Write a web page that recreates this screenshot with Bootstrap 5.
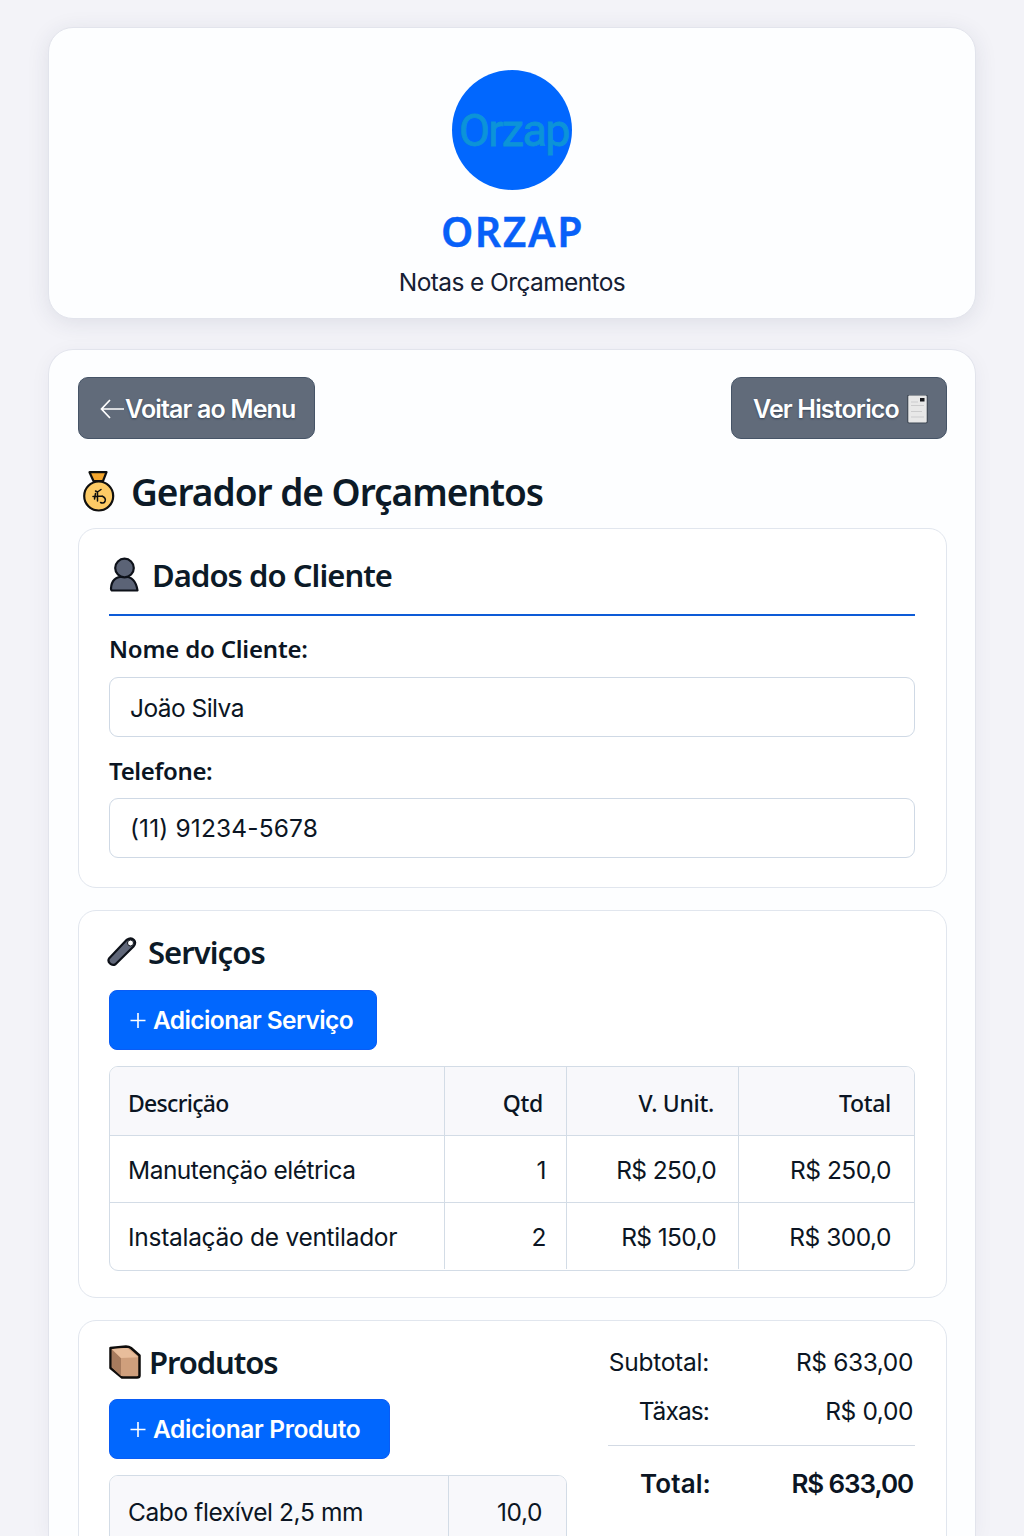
<!DOCTYPE html>
<html lang="pt-BR">
<head>
<meta charset="utf-8">
<meta name="viewport" content="width=device-width, initial-scale=1">
<title>ORZAP - Gerador de Orçamentos</title>
<link href="https://cdn.jsdelivr.net/npm/bootstrap@5.3.0/dist/css/bootstrap.min.css" rel="stylesheet">
<style>
  html, body { height: 1536px; overflow: hidden; }
  body { background: #f3f3f8; font-family: Inter, "Liberation Sans", sans-serif; font-size: 24.5px; line-height: 32px; color: #0b1523; padding: 27px 48px 0 48px; letter-spacing: -.4px; }
  .panel { background: #fdfeff; border: 1px solid #e2e4ec; border-radius: 25px; }
  .brand-panel { height: 292px; margin-bottom: 30px; padding-top: 42px; box-shadow: 0 4px 22px rgba(40, 45, 80, .10); }
  .main-panel { height: 1187px; padding: 27px 28px 0 29px; border-bottom: 0; border-radius: 25px 25px 0 0; overflow: hidden; box-shadow: 0 4px 20px rgba(40, 45, 80, .05); }
  .logo-disc { width: 120px; height: 120px; background: #0167fe; color: #0c93d8; font: 400 45px/122px Roboto, sans-serif; letter-spacing: -1.7px; padding-left: 7px; white-space: nowrap; -webkit-text-stroke: .8px #0c93d8; }
  .brand-name { font: 600 41px/50px "Noto Sans", sans-serif; letter-spacing: 1.6px; color: #0860f8; margin-top: 16px; padding-left: 1px; -webkit-text-stroke: .4px #0860f8; }
  .brand-sub { margin-top: 10px; letter-spacing: -.6px; color: #162033; }
  .btn-nav { height: 62px; background: #616b7a; border: 1px solid #465467; border-radius: 10px; color: #fff; font-weight: 600; padding: 3px 18px 0 21px; letter-spacing: -.85px; text-shadow: 0 1px 2px #364254; font-size: 25px; }
  .btn-back { width: 237px; }
  .btn-hist { width: 216px; }
  .btn-add { height: 60px; background: #0167fe; border: 1px solid #0a5cf5; border-radius: 8px; color: #fff; font-weight: 600; font-size: 24.5px; padding: 1px 20px 0; gap: 7px; }
  .btn-nav:hover, .btn-add:hover { color: #fff; background: #0a58ca; }
  .page-title { font: 600 37px/50px "Noto Sans", sans-serif; letter-spacing: -1px; color: #0c1a27; margin: 28px 0 11px; height: 50px; gap: 11px; }
  .box { background: #fff; border: 1px solid #e1e6ee; border-radius: 18px; padding: 0 31px 0 30px; margin-bottom: 22px; }
  .box-title { font: 600 31px/42px "Noto Sans", sans-serif; letter-spacing: -.95px; color: #0c1a27; margin: 0; height: 42px; gap: 12px; }
  .client { height: 360px; padding-top: 25px; }
  .client .box-title { gap: 11px; }
  .services { height: 388px; padding-top: 20px; }
  .products { height: 400px; padding-top: 20px; }
  .products .box-title { gap: 8px; letter-spacing: -1.1px; }
  .i-tool { margin: 0 -1px 0 -2px; }
  .blue-rule { height: 2px; background: #0d5bd7; margin-top: 18px; }
  .field-label { font: 600 24px/34px "Noto Sans", sans-serif; display: block; margin: 16px 0 11px; height: 34px; letter-spacing: -.2px; }
  .field + .field-label { margin: 17px 0 10px; letter-spacing: -.35px; }
  .field { height: 60px; border: 1px solid #cfd9e5; border-radius: 9px; padding: 2px 20px 0; font-size: 24.5px; color: #0b1523; letter-spacing: -.55px; }
  #telefone { letter-spacing: .15px; padding-top: 0; }
  .grid-box { border: 1px solid #d3dce6; border-radius: 9px; overflow: hidden; }
  .grid-box table { width: 100%; table-layout: fixed; margin: 0; border-collapse: separate; border-spacing: 0; }
  .grid-box th, .grid-box td { border-left: 1px solid #d3dce6; border-top: 1px solid #d3dce6; padding: 2px 23px 0 18px; text-align: right; font-weight: 400; white-space: nowrap; height: 67px; }
  .grid-box td { letter-spacing: -.5px; }
  .grid-box tr > :first-child { border-left: 0; text-align: left; }
  .grid-box tr:first-child > * { border-top: 0; }
  .grid-box th { background: #f8f8fb; font: 500 23px/32px "Noto Sans", sans-serif; letter-spacing: -.3px; height: 68px; padding-top: 3px; }
  .grid-box th:nth-child(3) { padding-right: 24px; }
  .grid-box th:first-child { letter-spacing: -.7px; }
  .grid-box td.wide { letter-spacing: -.28px; }
  .grid-box td.qty { padding-right: 20px; }
  .grid-box td.unit { padding-right: 22px; letter-spacing: -.65px; }
  .services .btn-add { margin-top: 17px; width: 268px; letter-spacing: -.6px; }
  .products .btn-add { margin-top: 16px; width: 281px; letter-spacing: -.35px; }
  .serv-grid { margin-top: 16px; height: 205px; }
  .prod-col { width: 458px; }
  .prod-grid { margin-top: 16px; height: 90px; }
  .prod-grid td { background: #f8f8fb; height: 70px; padding: 1px 24px 0 18px; letter-spacing: -.4px; }
  .sum { width: 307px; padding-top: 5px; }
  .sum-label { width: 101px; text-align: right; letter-spacing: -.25px; }
  .sum-line { height: 32px; padding-right: 2px; white-space: nowrap; }
  .tax { margin-top: 17px; }
  .tax .sum-label { letter-spacing: -.9px; }
  .grand { margin-top: 18px; border-top: 1px solid #d3dae4; height: 80px; padding-top: 22px; font-weight: 600; font-size: 26px; letter-spacing: -1.1px; }
  .grand .sum-label { width: 103px; letter-spacing: .1px; }
  svg { flex: none; display: block; }
</style>
</head>
<body>
<header class="panel brand-panel d-flex flex-column align-items-center">
  <div class="logo-disc rounded-circle">Orzap</div>
  <h1 class="brand-name mb-0">ORZAP</h1>
  <p class="brand-sub mb-0">Notas e Orçamentos</p>
</header>

<main class="panel main-panel">
  <div class="d-flex justify-content-between">
    <button class="btn btn-nav btn-back d-flex align-items-center" type="button">
      <svg width="25" height="22" viewBox="0 0 25 22" fill="none" stroke="#fff" stroke-width="1.7"><path d="M24 10H2M10 1L1.500 10L10 19"/></svg>
      <span>Voitar ao Menu</span>
    </button>
    <button class="btn btn-nav btn-hist d-flex align-items-center" type="button">
      <span>Ver Historico</span>
      <svg class="ms-2" width="21" height="30" viewBox="0 0 21 30"><rect x=".7" y="0" width="19.600" height="28" rx="1.500" fill="#e8e8e8" stroke="#3f4854" stroke-width="1.200"/><rect x="13" y="3" width="4.500" height="3.500" fill="#17191d"/><path d="M4 7H11M4 10.500H17M4 16.500H15M4 22H17" stroke="#cccccd" stroke-width="1.200"/></svg>
    </button>
  </div>

  <h2 class="page-title d-flex align-items-center">
    <svg width="42" height="42" viewBox="0 0 42 42" stroke="#10100f" stroke-width="2.200" stroke-linejoin="round" stroke-linecap="round"><path d="M11.500 1.200H28.500L25 10H15.500Z" fill="#f5a72e"/><circle cx="20.700" cy="25" r="14.500" fill="#fdcb65"/><path d="M23 18.500L19.500 21V30M19.500 21L17.500 20M15 25.500L24 25M17.500 22.500L16.500 28M24 25Q28.500 27 27 30.500Q25.500 33 22.500 31.500" fill="none" stroke-width="1.500"/></svg>
    <span>Gerador de Orçamentos</span>
  </h2>

  <section class="box client">
    <h3 class="box-title d-flex align-items-center">
      <svg width="32" height="36" viewBox="0 0 32 36" fill="#5b6376" stroke="#0d1119" stroke-width="2.200" stroke-linejoin="round"><path d="M3.500 33.500Q2 33.500 2 31.500Q2.500 19.500 15 19.500Q26.500 19.500 28.500 33.500Z"/><circle cx="15.500" cy="11" r="9.300"/></svg>
      <span>Dados do Cliente</span>
    </h3>
    <div class="blue-rule"></div>
    <label class="field-label" for="nome">Nome do Cliente:</label>
    <input class="form-control field" id="nome" type="text" value="Joäo Silva">
    <label class="field-label" for="telefone">Telefone:</label>
    <input class="form-control field" id="telefone" type="text" value="(11) 91234-5678">
  </section>

  <section class="box services">
    <h3 class="box-title d-flex align-items-center">
      <svg class="i-tool" width="30" height="30" viewBox="0 0 30 30" stroke="#0d1119" stroke-width="2.200" stroke-linejoin="round"><path d="M2 21.500L19.500 3Q24 0 27 3Q29.500 6 26.500 9.500L8.500 27.200Q5.500 29 3 26.500Q.5 24 2 21.500Z" fill="#606779"/><circle cx="23.500" cy="6" r="3" fill="#fff" stroke-width="1"/></svg>
      <span>Serviços</span>
    </h3>
    <button class="btn btn-add d-flex align-items-center" type="button">
      <svg width="16" height="16" viewBox="0 0 16 16" stroke="#fff" stroke-width="1.600"><path d="M8 0V15M.5 7.500H15.500"/></svg>
      <span>Adicionar Serviço</span>
    </button>
    <div class="grid-box serv-grid">
      <table>
        <colgroup><col style="width:334px"><col style="width:122px"><col style="width:172px"><col></colgroup>
        <tr><th>Descriçäo</th><th>Qtd</th><th>V. Unit.</th><th>Total</th></tr>
        <tr><td>Manutençäo elétrica</td><td class="qty">1</td><td class="unit">R$ 250,0</td><td>R$ 250,0</td></tr>
        <tr><td class="wide">Instalaçäo de ventilador</td><td class="qty">2</td><td class="unit">R$ 150,0</td><td>R$ 300,0</td></tr>
      </table>
    </div>
  </section>

  <section class="box products d-flex justify-content-between">
    <div class="prod-col">
      <h3 class="box-title d-flex align-items-center">
        <svg width="32" height="34" viewBox="0 0 32 34" stroke-linejoin="round"><path d="M1.500 3L17 1.500Q20 1.500 22 3L30.500 10.500V30.500Q30.500 32.500 28 32.500H13L1.500 23Z" fill="#d9a783" stroke="#0e0c0b" stroke-width="2.500"/><path d="M2.800 4.500L12 13V31L2.800 22.500Z" fill="#a77b5e"/><path d="M3 4L18 3L29 12L12 13Z" fill="#e8bd9b"/><path d="M12 13H29V31H12Z" fill="#cf9f7c"/></svg>
        <span>Produtos</span>
      </h3>
      <button class="btn btn-add d-flex align-items-center" type="button">
        <svg width="16" height="16" viewBox="0 0 16 16" stroke="#fff" stroke-width="1.600"><path d="M8 0V15M.5 7.500H15.500"/></svg>
        <span>Adicionar Produto</span>
      </button>
      <div class="grid-box prod-grid">
        <table>
          <colgroup><col style="width:338px"><col></colgroup>
          <tr><td>Cabo flexível 2,5 mm</td><td>10,0</td></tr>
        </table>
      </div>
    </div>
    <div class="sum">
      <div class="sum-line d-flex justify-content-between"><span class="sum-label">Subtotal:</span><span>R$ 633,00</span></div>
      <div class="sum-line d-flex justify-content-between tax"><span class="sum-label">Täxas:</span><span>R$ 0,00</span></div>
      <div class="sum-line d-flex justify-content-between grand"><span class="sum-label">Total:</span><span>R$ 633,00</span></div>
    </div>
  </section>
</main>
<script src="https://cdn.jsdelivr.net/npm/bootstrap@5.3.0/dist/js/bootstrap.bundle.min.js"></script>
</body>
</html>
